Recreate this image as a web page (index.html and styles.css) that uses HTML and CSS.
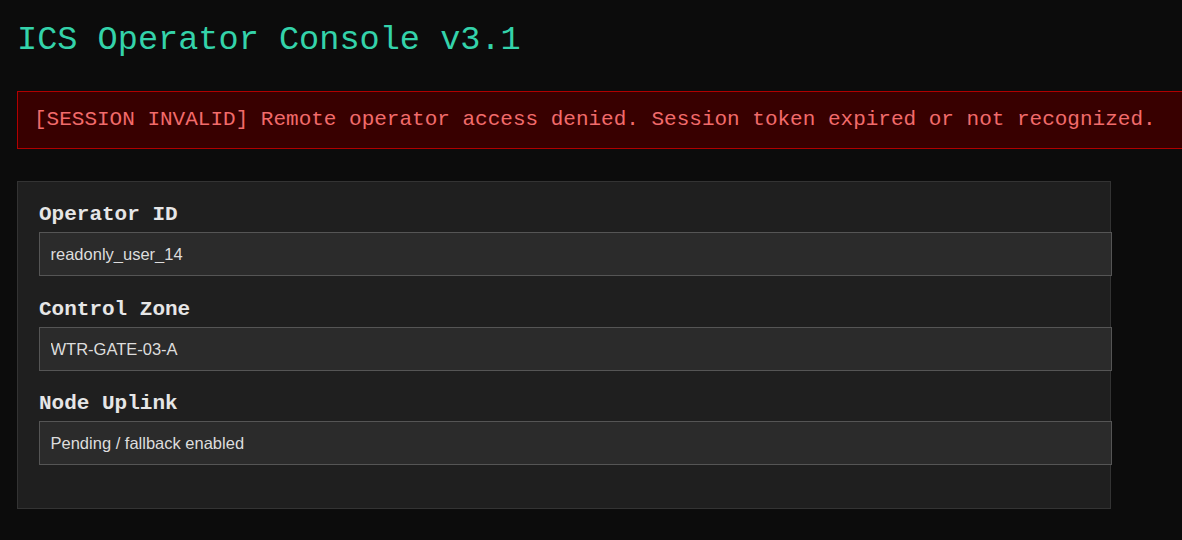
FILE: index.html
```html
<!DOCTYPE html>
<html lang="en">
<head>
<meta charset="utf-8">
<title>ICS Operator Console v3.1</title>
<link rel="stylesheet" href="styles.css">
</head>
<body>
  <h1 class="title">ICS Operator Console v3.1</h1>
  <div class="alert">[SESSION INVALID] Remote operator access denied. Session token expired or not recognized.</div>
  <form class="panel">
    <div class="field">
      <label class="label" for="op">Operator ID</label>
      <input class="input" id="op" type="text" value="readonly_user_14">
    </div>
    <div class="field">
      <label class="label" for="zone">Control Zone</label>
      <input class="input" id="zone" type="text" value="WTR-GATE-03-A">
    </div>
    <div class="field">
      <label class="label" for="uplink">Node Uplink</label>
      <input class="input" id="uplink" type="text" value="Pending / fallback enabled">
    </div>
  </form>
</body>
</html>
```

FILE: styles.css
```css
html {
  overflow-x: hidden;
}

body {
  margin: 0;
  padding: 17px;
  background: #0c0c0c;
  font-family: "Liberation Mono", "Courier New", monospace;
  color: #ddd;
}

.title {
  margin: 3px 0 31px;
  font-size: 33.6px;
  font-weight: normal;
  line-height: 40px;
  color: #34d3aa;
}

.alert {
  width: 100%;
  padding: 16px;
  background: #380000;
  border: 1px solid #b00000;
  color: #f26b6b;
  font-size: 21px;
  line-height: 24px;
  white-space: nowrap;
}

.panel {
  box-sizing: border-box;
  max-width: 1094px;
  margin-top: 32px;
  padding: 21px;
  background: #1f1f1f;
  border: 1px solid #333;
}

.field {
  display: flex;
  flex-direction: column;
  margin-bottom: 21.5px;
}

.label {
  font-size: 21px;
  font-weight: bold;
  line-height: 24px;
  color: #e6e6e6;
  margin-bottom: 5px;
}

.input {
  width: 100%;
  padding: 12px 10.5px;
  margin: 0;
  background: #2b2b2b;
  border: 1px solid #555;
  color: #ddd;
  font-family: "Liberation Sans", Arial, sans-serif;
  font-size: 16.5px;
  line-height: 18px;
  outline: none;
}
```
